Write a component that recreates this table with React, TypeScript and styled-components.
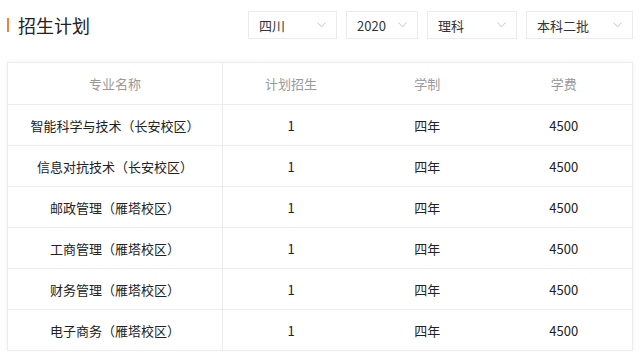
import styled, { createGlobalStyle } from 'styled-components';

const GlobalStyle = createGlobalStyle`
	html, body {
		margin: 0;
		padding: 0;
		background: #fff;
		font-family: "Noto Sans CJK SC", "Noto Sans", sans-serif;
	}
`;

const Page = styled.div`
	width: 641px;
	padding: 11px 8px 0 7px;
	box-sizing: border-box;
`;

const Header = styled.div`
	display: flex;
	align-items: center;
	justify-content: space-between;
	height: 28px;
`;

const Title = styled.h2`
	display: flex;
	align-items: center;
	gap: 9px;
	margin: 0;
	font-size: 18px;
	font-weight: 400;
	color: #222;
	&::before {
		content: '';
		width: 2px;
		height: 14px;
		background: #e8873a;
	}
`;

const Filters = styled.div`
	display: flex;
	gap: 9px;
`;

const Select = styled.div<{ $w: number }>`
	display: flex;
	align-items: center;
	justify-content: space-between;
	width: ${p => p.$w}px;
	height: 28px;
	box-sizing: border-box;
	padding: 0 10px 0 10px;
	border: 1px solid #ebebeb;
	font-size: 13px;
	color: #333;
`;

const Chevron = () => (
	<svg width="9" height="6" viewBox="0 0 9 6">
		<path d="M0.5 0.5 L4.5 5 L8.5 0.5" fill="none" stroke="#c8c8c8" strokeWidth="1" />
	</svg>
);

const Card = styled.div`
	margin-top: 23px;
	width: 624px;
	border: 1px solid #ececec;
	box-shadow: 0 0 6px rgba(0, 0, 0, 0.06);
	background: #fff;
`;

const Table = styled.table`
	width: 100%;
	border-collapse: collapse;
	table-layout: fixed;
	font-size: 13px;
`;

const Th = styled.th`
	height: 41px;
	padding: 0;
	font-weight: 400;
	color: #999;
	text-align: center;
	border-bottom: 1px solid #ececec;
	&:first-child {
		width: 214px;
		border-right: 1px solid #ececec;
	}
`;

const Td = styled.td`
	height: 40px;
	padding: 0;
	color: #222;
	text-align: center;
	border-top: 1px solid #ececec;
	&:first-child {
		border-right: 1px solid #ececec;
	}
`;

const rows = [
	'智能科学与技术（长安校区）',
	'信息对抗技术（长安校区）',
	'邮政管理（雁塔校区）',
	'工商管理（雁塔校区）',
	'财务管理（雁塔校区）',
	'电子商务（雁塔校区）',
];

const filters = [
	{ label: '四川', w: 89 },
	{ label: '2020', w: 72 },
	{ label: '理科', w: 90 },
	{ label: '本科二批', w: 107 },
];

export default function App() {
	return (
		<>
			<GlobalStyle />
			<Page>
				<Header>
					<Title>招生计划</Title>
					<Filters>
						{filters.map(f => (
							<Select key={f.label} $w={f.w}>
								<span>{f.label}</span>
								<Chevron />
							</Select>
						))}
					</Filters>
				</Header>
				<Card>
					<Table>
						<thead>
							<tr>
								<Th>专业名称</Th>
								<Th>计划招生</Th>
								<Th>学制</Th>
								<Th>学费</Th>
							</tr>
						</thead>
						<tbody>
							{rows.map(name => (
								<tr key={name}>
									<Td>{name}</Td>
									<Td>1</Td>
									<Td>四年</Td>
									<Td>4500</Td>
								</tr>
							))}
						</tbody>
					</Table>
				</Card>
			</Page>
		</>
	);
}
